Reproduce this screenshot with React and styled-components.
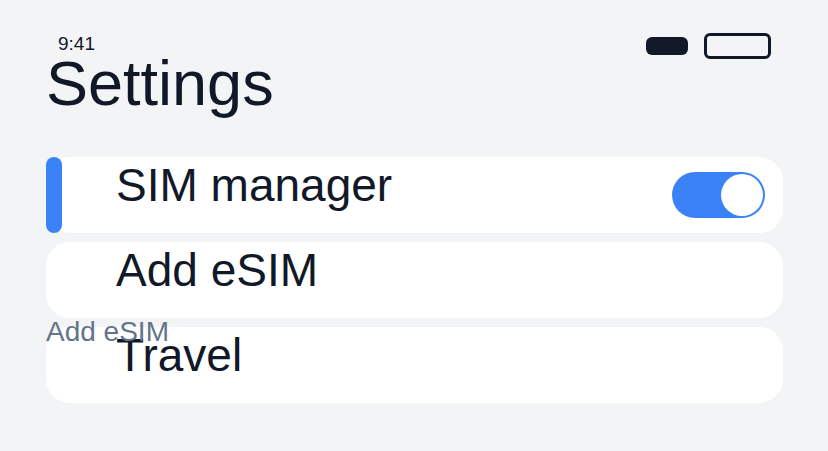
import React, { useState } from "react";
import styled, { createGlobalStyle } from "styled-components";

const blue = "#3b82f6";
const ink = "#111827";

const GlobalStyle = createGlobalStyle`
  html, body {
    margin: 0;
    background: #f3f4f6;
  }
  body {
    font-family: "Liberation Sans", Arial, sans-serif;
    color: ${ink};
  }
`;

const Page = styled.div`
  padding: 33px 45px 40px 46px;
`;

const StatusBar = styled.div`
  display: flex;
  justify-content: space-between;
  align-items: flex-start;
  height: 26px;
  padding: 0 12px;
`;

const Time = styled.span`
  font-size: 19px;
  line-height: 19px;
  padding-top: 1px;
`;

const StatusIcons = styled.div`
  display: flex;
  align-items: center;
  gap: 16px;
  height: 26px;
`;

const Signal = styled.div`
  width: 42px;
  height: 18px;
  border-radius: 6px;
  background: ${ink};
`;

const Battery = styled.div`
  width: 67px;
  height: 26px;
  box-sizing: border-box;
  border: 3px solid ${ink};
  border-radius: 6px;
`;

const Title = styled.h1`
  margin: -7px 0 42px;
  font-size: 63px;
  font-weight: 400;
  line-height: 1;
`;

const List = styled.div`
  display: flex;
  flex-direction: column;
  gap: 9px;
`;

const Card = styled.div`
  position: relative;
  display: flex;
  justify-content: space-between;
  align-items: flex-start;
  height: 76px;
  box-sizing: border-box;
  padding: 5px 18px 0 70px;
  background: #fff;
  border-radius: 24px;
`;

const ActiveBar = styled.span`
  position: absolute;
  left: 0;
  top: 0;
  bottom: 0;
  width: 16px;
  border-radius: 8px;
  background: ${blue};
`;

const Label = styled.span`
  font-size: 46px;
  line-height: 1;
`;

const Hint = styled.span`
  position: absolute;
  left: 0;
  top: 100%;
  z-index: 1;
  font-size: 28px;
  line-height: 1;
  color: #64748b;
`;

const Toggle = styled.button`
  align-self: center;
  margin-top: -5px;
  position: relative;
  width: 93px;
  height: 46px;
  padding: 0;
  border: none;
  border-radius: 23px;
  background: ${(p) => (p.$on ? blue : "#d1d5db")};
  cursor: pointer;

  &::after {
    content: "";
    position: absolute;
    top: 2px;
    left: ${(p) => (p.$on ? "49px" : "2px")};
    width: 42px;
    height: 42px;
    border-radius: 50%;
    background: #fff;
  }
`;

export default function App() {
  const [simOn, setSimOn] = useState(true);

  return (
    <>
      <GlobalStyle />
      <Page>
        <StatusBar>
          <Time>9:41</Time>
          <StatusIcons>
            <Signal />
            <Battery />
          </StatusIcons>
        </StatusBar>
        <Title>Settings</Title>
        <List>
          <Card>
            <ActiveBar />
            <Label>SIM manager</Label>
            <Toggle $on={simOn} onClick={() => setSimOn(!simOn)} aria-label="SIM manager" />
          </Card>
          <Card>
            <Label>Add eSIM</Label>
            <Hint>Add eSIM</Hint>
          </Card>
          <Card>
            <Label>Travel</Label>
          </Card>
        </List>
      </Page>
    </>
  );
}
